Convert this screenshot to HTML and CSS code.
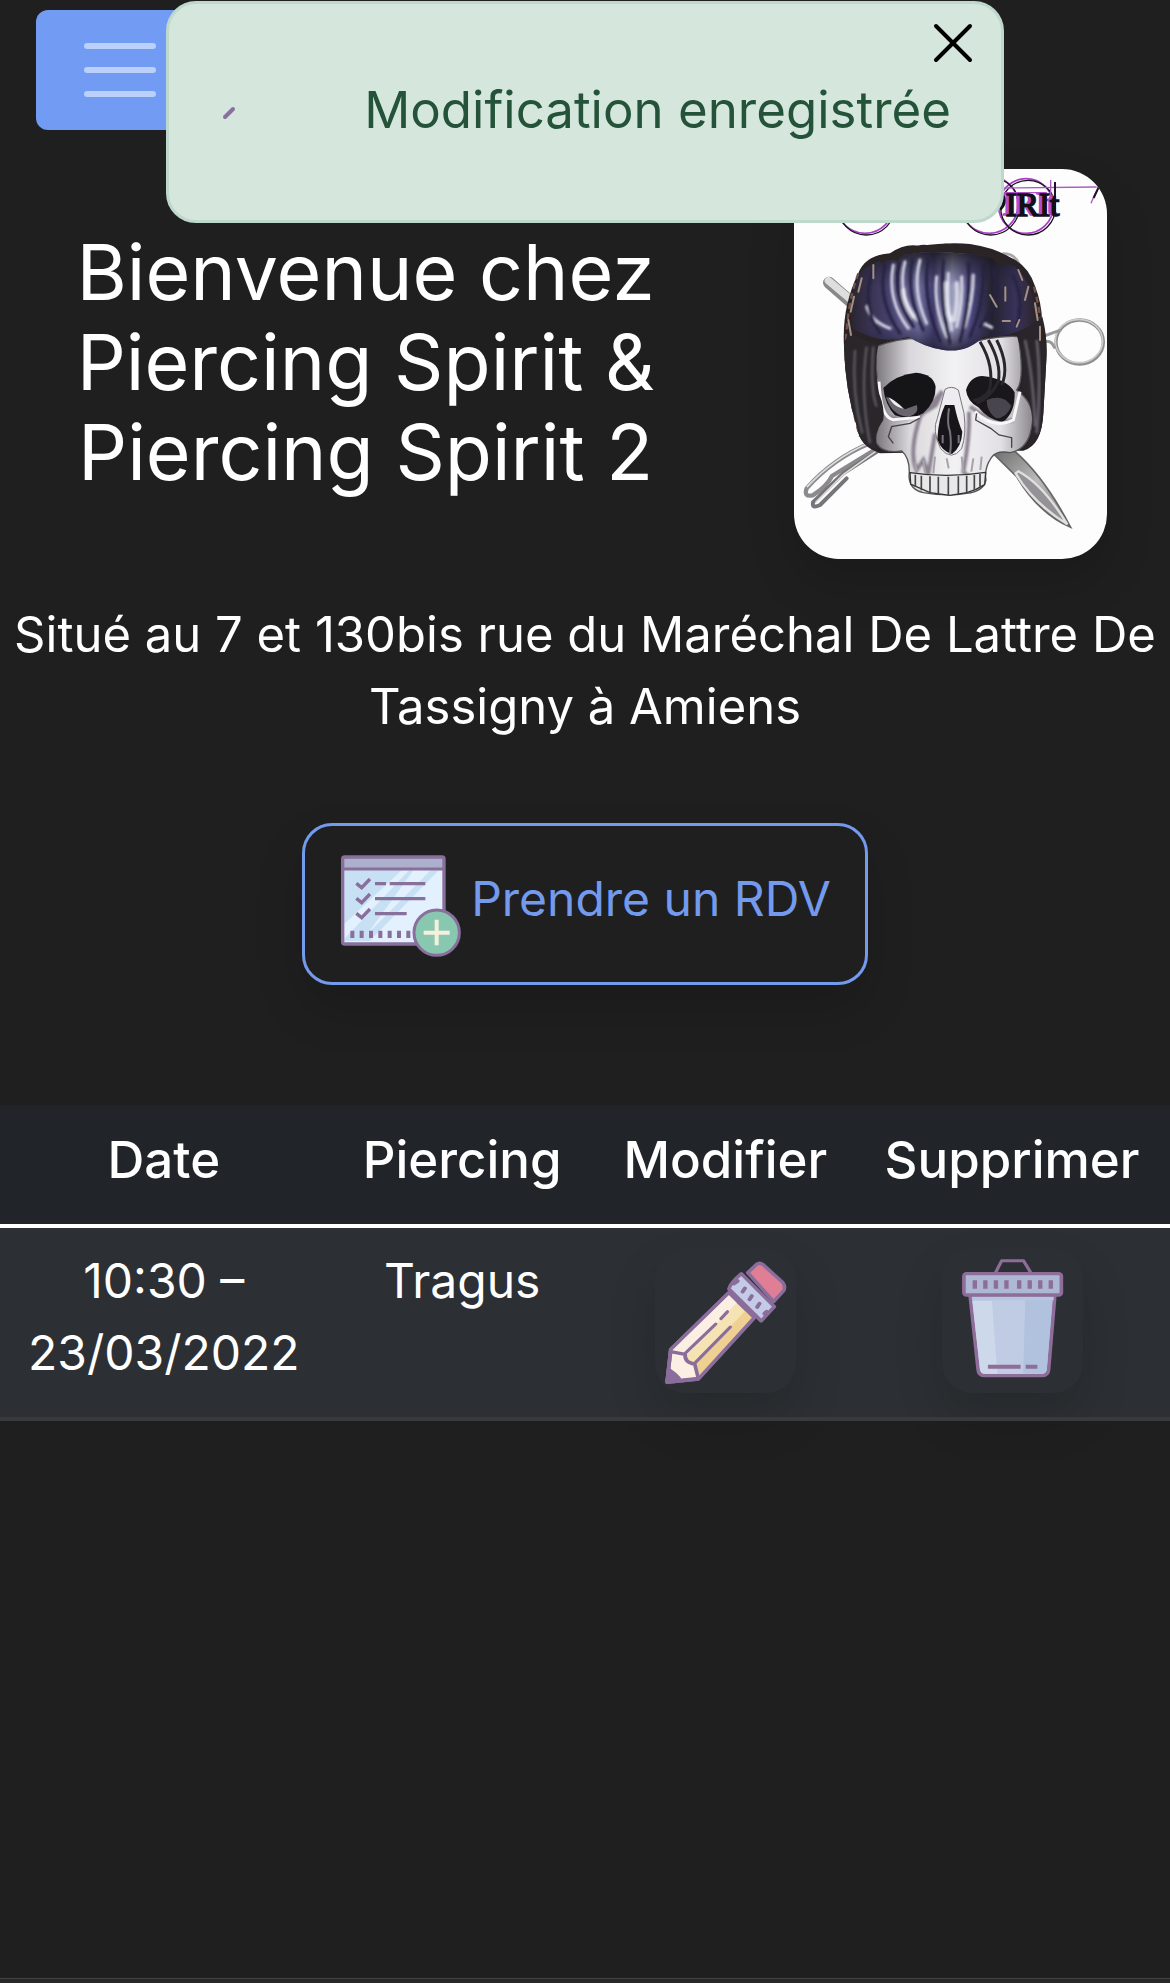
FILE: index.html
```html
<!DOCTYPE html>
<html lang="fr">
<head>
<meta charset="utf-8">
<meta name="viewport" content="width=device-width, initial-scale=1">
<title>Piercing Spirit</title>
<link rel="stylesheet" href="styles.css">
</head>
<body>
<div class="alert" role="alert">
  <svg class="alert-icon" viewBox="0 0 96 96" aria-hidden="true"><path d="M8 55l8-8" stroke="#8b6f9f" stroke-width="4" stroke-linecap="round"/></svg>
  <span class="alert-text">Modification enregistrée</span>
  <button class="alert-close" type="button" aria-label="Fermer">
    <svg viewBox="0 0 40 40" aria-hidden="true"><path d="M3 3l34 34M37 3L3 37" stroke="#000" stroke-width="4" stroke-linecap="round"/></svg>
  </button>
</div>

<nav class="navbar">
  <button class="toggler" type="button" aria-label="Menu"><span class="bar"></span><span class="bar"></span><span class="bar"></span></button>
</nav>

<main>
  <header class="hero">
    <h1 class="title">Bienvenue chez Piercing Spirit &amp; Piercing Spirit 2</h1>
    <svg class="logo" viewBox="42 27 939 1170" role="img" aria-label="Logo Piercing Spirit">
      <defs>
        <linearGradient id="hair" x1="0" x2="1"><stop offset="0" stop-color="#2a2533"/><stop offset=".2" stop-color="#47416e"/><stop offset=".36" stop-color="#6b6a98"/><stop offset=".44" stop-color="#413d6c"/><stop offset=".54" stop-color="#9a9cbd"/><stop offset=".64" stop-color="#4a467b"/><stop offset=".75" stop-color="#24222f"/><stop offset=".88" stop-color="#39335a"/><stop offset="1" stop-color="#2b2225"/></linearGradient>
        <linearGradient id="bone" x1="0" x2="1"><stop offset="0" stop-color="#77737a"/><stop offset=".22" stop-color="#dad8dc"/><stop offset=".5" stop-color="#f2f1f3"/><stop offset=".8" stop-color="#e2e0e4"/><stop offset="1" stop-color="#8b878e"/></linearGradient>
        <linearGradient id="steel" x1="0" x2="1" y2="1"><stop offset="0" stop-color="#666"/><stop offset=".5" stop-color="#bbb"/><stop offset="1" stop-color="#777"/></linearGradient>
        <linearGradient id="fade" x2="0" y2="1"><stop offset="0" stop-color="#171519" stop-opacity=".8"/><stop offset=".35" stop-color="#2b2845" stop-opacity="0"/><stop offset=".75" stop-color="#2b2845" stop-opacity="0"/><stop offset="1" stop-color="#211f38" stop-opacity=".9"/></linearGradient>
        <filter id="soft"><feGaussianBlur stdDeviation="3"/></filter>
      </defs>
      <rect x="42" y="27" width="939" height="1170" fill="#fdfdfd"/>
      <g fill="none" stroke-width="5">
        <g stroke="#a63fc4"><circle cx="255" cy="134" r="86"/><circle cx="628" cy="134" r="86"/><circle cx="738" cy="138" r="82"/></g>
        <g stroke="#1a101e" stroke-width="4"><circle cx="259" cy="139" r="86"/><circle cx="632" cy="139" r="86"/><circle cx="744" cy="143" r="82"/></g>
        <path d="M600 85l350-4M670 98h130M812 60v50M955 82q-12 22-22 48" stroke="#a95cc0" stroke-width="4"/>
        <path d="M825 66v95M957 80l-16 34" stroke="#20102a" stroke-width="6"/>
        <path d="M664 102q20 20-4 46" stroke="#140e18" stroke-width="10"/>
      </g>
      <g font-family="Liberation Serif, serif" font-size="100" stroke-width="5" text-anchor="end"><text x="828" y="164" fill="#b24dcb" stroke="#b24dcb">IRIt</text><text x="838" y="168" fill="#140e18" stroke="#140e18">IRIt</text></g>
      <g stroke-linecap="round" fill="none">
        <path d="M147 368L220 432" stroke="#888" stroke-width="36"/><path d="M145 362L220 425" stroke="#dedede" stroke-width="22"/>
        <path d="M670 281q45-2 58 62" stroke="#aaa" stroke-width="8"/>
        <ellipse cx="899" cy="546" rx="71" ry="66" stroke="#8f8d92" stroke-width="10"/><ellipse cx="897" cy="543" rx="71" ry="65" stroke="#ccc" stroke-width="5"/>
        <path d="M785 531q35-14 55-20M795 544q20-3 28 18" stroke="#999" stroke-width="9"/>
        <path d="M270 850Q160 895 80 985Q70 1012 98 1006Q140 980 156 948L290 866" stroke="#8c8a8e" stroke-width="13"/>
        <path d="M298 870L190 940L99 1027Q95 1047 120 1035L200 955" stroke="#777579" stroke-width="12"/>
        <path d="M268 848Q160 895 82 980M290 872L190 944L108 1026" stroke="#ddd" stroke-width="5"/>
      </g>
      <path d="M624 865l72 2Q790 945 872 1102Q775 1060 710 950Z" fill="url(#steel)" stroke="#666" stroke-width="5"/>
      <path d="M715 934Q790 975 862 1093Q755 1025 707 940Z" fill="#949297" stroke="#e0e0e0" stroke-width="7"/>
      <!-- hair mass -->
      <path d="M235 340Q255 285 330 280Q375 248 420 258Q510 245 570 252Q640 262 690 292Q745 315 765 378Q785 430 786 480Q803 530 799 600L790 760Q785 858 730 872L300 880Q240 860 232 805Q195 690 192 560Q185 440 235 340Z" fill="#292328"/>
      <path d="M235 340Q195 450 197 600Q212 740 240 830M762 380Q792 500 789 600Q792 730 770 830" fill="none" stroke="#725248" stroke-width="7" stroke-dasharray="18 13"/>
      <!-- skull -->
      <path d="M288 560Q420 510 530 560Q640 525 715 530Q735 660 710 690Q770 735 755 800Q745 868 690 878Q650 870 634 893Q612 925 618 960Q610 995 560 1000Q500 1010 430 998Q390 990 387 950Q392 895 365 873Q310 882 290 850Q275 800 310 768Q285 660 288 560Z" fill="url(#bone)" stroke="#555" stroke-width="4"/>
      <path d="M297 655Q300 740 318 770Q390 790 468 735L487 694L420 770Q385 880 410 930L430 900L445 945L465 820M567 755Q570 830 550 936L580 960M570 740Q635 790 700 780" fill="none" stroke="#8b8291" stroke-width="12" filter="url(#soft)"/>
      <path d="M310 684Q345 645 408 638Q460 642 467 680Q468 725 430 760Q390 782 345 766Q315 735 310 684Z" fill="#151416"/>
      <path d="M318 710Q345 720 375 748L410 735Q420 760 385 770Q335 768 318 710Z" fill="#69656e"/>
      <path d="M325 712Q345 720 370 746Q350 742 338 729Z" fill="#eee"/>
      <path d="M558 690Q570 650 607 648Q680 655 704 697Q706 760 668 786Q625 780 595 742Q562 725 558 690Z" fill="#19171a"/>
      <path d="M620 720Q670 700 694 738Q680 775 648 775Q620 755 620 720Z" fill="#49454e"/>
      <path d="M297 665Q302 775 340 779L420 772M585 755Q640 810 700 780L720 695" fill="none" stroke="#f7f7f7" stroke-width="9"/>
      <path d="M420 774L390 790L335 800L325 830L340 850M590 760l-3 20l45 25l25 20l38 8v30" fill="none" stroke="#464248" stroke-width="4"/>
      <path d="M495 688Q515 675 535 690L552 760Q560 820 545 866Q515 905 482 866Q455 810 472 775Z" fill="#eeecf0" stroke="#777" stroke-width="3"/>
      <path d="M495 735h28Q532 780 547 815Q545 860 516 882Q485 875 472 838Q475 775 495 735Z" fill="#17151a"/>
      <path d="M507 745Q500 790 510 815Q515 850 510 882M488 825v25M536 825v25" stroke="#777380" stroke-width="6" fill="none"/>
      <path d="M390 938Q500 955 617 937L614 974Q590 990 560 998L510 1006L450 998L392 972Z" fill="#e8e7e9" stroke="#333" stroke-width="4"/>
      <path d="M406 944v36M424 947v44M450 949v50M475 950v52M505 950v56M535 949v54M560 947v51M583 945v44M600 942v38" stroke="#444" stroke-width="5"/>
      <path d="M405 905l5 28M430 900l5 38M465 890l-5 50M500 895l6 30M545 890l5 48M580 895l-6 40M605 890l-4 40" stroke="#a7a3aa" stroke-width="6"/>
      <!-- side hair and quiff -->
      <path d="M203 520L295 555Q280 620 297 700Q315 745 310 780Q280 820 290 868Q240 860 232 805Q195 690 192 560Z" fill="#2a272b"/>
      <path d="M260 560Q240 700 270 850M225 570Q215 700 247 820M280 560Q270 690 290 740" fill="none" stroke="#5d5862" stroke-width="7" filter="url(#soft)"/>
      <path d="M705 510L787 470Q803 530 799 600L790 760Q785 850 740 863Q780 770 726 680Q738 600 705 510Z" fill="#29252a"/>
      <path d="M735 540Q760 650 765 800M770 540Q785 660 770 820" fill="none" stroke="#66616c" stroke-width="8" filter="url(#soft)"/>
      <path d="M245 330Q320 285 420 278Q600 270 705 320Q760 370 775 480Q700 535 610 530Q560 580 490 570Q430 560 385 530Q300 555 217 505Q205 410 245 330Z" fill="url(#hair)"/>
      <path d="M245 330Q320 285 420 278Q600 270 705 320Q760 370 775 480Q700 535 610 530Q560 580 490 570Q430 560 385 530Q300 555 217 505Q205 410 245 330Z" fill="url(#fade)"/>
      <g fill="none" stroke-linecap="round" filter="url(#soft)">
        <path d="M340 315Q320 420 385 505M375 305Q350 400 410 480M420 300Q395 390 440 490M470 350Q460 440 500 530M505 340Q500 430 515 510M545 350Q550 430 530 500M580 345Q580 420 555 500M260 440Q275 485 330 505M610 490l25 12" stroke="#d4d5e6" stroke-width="9"/>
        <path d="M500 370Q490 430 512 480M530 370Q535 430 522 480M370 390Q370 430 400 470" stroke="#f2f3fa" stroke-width="14" opacity=".7"/>
        <path d="M315 310Q290 420 360 520M358 310Q335 400 400 500M398 300Q375 400 430 510M445 300Q425 410 480 545M490 300Q480 440 510 550M565 310Q575 420 540 545M610 320Q615 430 570 530M280 330Q240 430 300 520M640 330Q670 420 600 500M700 350Q735 420 710 500" stroke="#252143" stroke-width="9"/>
      </g>
      <path d="M280 315v40M245 355l-10 40M222 410l-10 45M205 480l8 45M715 330l12 30M745 380l-10 40M765 430l8 50M676 382v40M630 405l20 35M690 483h-22M718 480l-8 20M780 500v40" stroke="#a39183" stroke-width="6" stroke-linecap="round"/>
      <path d="M600 545Q645 620 628 690Q615 715 580 722M625 540Q665 610 655 665Q630 715 590 730M650 540Q690 620 665 675" fill="none" stroke="#29272c" stroke-width="9"/>
      <path d="M300 305q25-20 50-12q15-28 45-20q35-18 60-5q40-16 75-2q35-14 70 14q45 0 70 35" fill="none" stroke="#2a2524" stroke-width="17"/>
    </svg>
  </header>

  <p class="address">Situé au 7 et 130bis rue du Maréchal De Lattre De Tassigny à Amiens</p>

  <div class="actions">
    <a class="booking" href="#rdv">
      <svg class="booking-icon" viewBox="36 11 360 360" aria-hidden="true">
        <rect x="41" y="50" width="304" height="261" rx="6" fill="#e3f0fd"/>
        <path d="M46 90h172L46 250z" fill="#c7e0f4"/><path d="M235 90h18L100 302H80L46 302v-20zM305 90h24L122 302h-27z" fill="#c7e0f4"/>
        <path d="M240 90h-10L46 266v30z" fill="#e3f0fd"/>
        <rect x="44" y="53" width="300" height="30" fill="#adb0cc"/>
        <rect x="41" y="50" width="304" height="261" rx="6" fill="none" stroke="#886f9c" stroke-width="10"/>
        <path d="M41 86h304" stroke="#886f9c" stroke-width="9"/>
        <path d="M82 129l16 13l25-26M82 174l16 13l25-26M82 219l16 13l25-26M138 130h33M182 130h107M138 175h151M138 220h95" fill="none" stroke="#886f9c" stroke-width="10"/>
        <path d="M70 271v22M98 271v22M126 271v22M154 271v22M182 271v22M210 271v22M238 271v22" stroke="#886f9c" stroke-width="12"/>
        <circle cx="323" cy="277" r="68" fill="#88c8b0" stroke="#886f9c" stroke-width="9"/>
        <path d="M323 238v77M284 277h78" stroke="#f5f0dd" stroke-width="12"/>
      </svg>
      <span>Prendre un RDV</span>
    </a>
  </div>

  <table class="bookings">
    <colgroup><col class="col-date"><col class="col-piercing"><col class="col-edit"><col class="col-delete"></colgroup>
    <thead><tr><th scope="col">Date</th><th scope="col">Piercing</th><th scope="col">Modifier</th><th scope="col">Supprimer</th></tr></thead>
    <tbody><tr>
      <td>10:30 – 23/03/2022</td>
      <td>Tragus</td>
      <td class="icon-cell"><button class="icon-button" type="button" aria-label="Modifier">
        <svg viewBox="158 84 423 432" aria-hidden="true"><g transform="scale(1.0909 1)" stroke="#8a6d9b" stroke-width="10" stroke-linejoin="round" stroke-linecap="round">
          <path d="M348 215L418 290L264 474L178 484L188 385Z" fill="#f6e3b4"/>
          <path d="M350 218L372 242L232 402L190 388Z" fill="#faefe2" stroke="none"/>
          <path d="M396 266L418 290L264 470L255 427Z" fill="#efd093" stroke="none"/>
          <path d="M188 392L228 400Q225 424 254 429L264 472L178 482Z" fill="#faefe2"/>
          <path d="M178 482l8-34q14 10 25 24Z" fill="#8a6d9b"/>
          <path d="M348 215L418 290L264 474L178 484L188 385Z" fill="none"/>
          <path d="M228 397L312 309M254 427L352 318M326 293L344 272" fill="none" stroke-width="9"/>
          <path d="M400 155L424 130Q433 122 443 132L496 184Q505 198 498 210L471 242Z" fill="#df7e95"/>
          <path d="M382 158L473 257L437 300L348 204Q352 185 382 158Z" fill="#c3cbe6"/>
          <path d="M386 212l6-10M405 235l6-10M426 258l6-10M362 188l10-8M452 272l-6 6" fill="none" stroke-width="11"/>
        </g></svg></button></td>
      <td class="icon-cell"><button class="icon-button" type="button" aria-label="Supprimer">
        <svg viewBox="1023 84 423 432" aria-hidden="true"><g transform="scale(1.0909 1)" stroke="#8f6d9a" stroke-width="10" stroke-linejoin="round">
          <path d="M1085 155L1102 119H1162L1182 155" fill="none" stroke-width="9"/>
          <path d="M1015 223H1248L1231 445Q1230 464 1211 464H1056Q1038 464 1037 445Z" fill="#bfcce4"/>
          <path d="M1021 240H1075L1090 458H1058Q1044 458 1042 443Z" fill="#cdd8eb" stroke="none"/>
          <path d="M1167 228H1242L1226 445Q1224 458 1211 458H1161Z" fill="#b1c2de" stroke="none"/>
          <path d="M1020 232H1245" stroke="#b5c6df" stroke-width="12"/>
          <rect x="998" y="158" width="268" height="64" rx="7" fill="#adb8d3"/>
          <path d="M1028 178v25M1057 178v25M1086 178v25M1115 178v25M1150 178v25M1179 178v25M1208 178v25M1237 178v25M1064 437h90M1168 437h32" fill="none" stroke-width="12"/>
        </g></svg></button></td>
    </tr></tbody>
  </table>
</main>
<footer class="footer"></footer>
</body>
</html>
```
FILE: styles.css
```css
* { box-sizing: border-box; }

body {
  margin: 0;
  min-height: 100vh;
  display: flex;
  flex-direction: column;
  background: #1f1f1f;
  color: #fff;
  font-family: Inter, "Liberation Sans", sans-serif;
  font-size: 48px;
  line-height: 72px;
}

main { flex: 1; }

button { font: inherit; border: 0; padding: 0; cursor: pointer; }

svg { display: block; }

.alert {
  position: fixed;
  z-index: 10;
  top: 1px;
  left: 50%;
  width: 838px;
  max-width: 100%;
  min-height: 222px;
  transform: translateX(-50%);
  display: flex;
  align-items: center;
  justify-content: space-between;
  padding: 0 50px 4px 48px;
  background: #d5e7dd;
  border: 3px solid #bfd8cc;
  border-radius: 30px;
  color: #245339;
  font-size: 51px;
}

.alert-icon { width: 96px; height: 96px; fill: none; }

.alert-text { white-space: nowrap; }

.alert-close {
  position: absolute;
  top: 19px;
  right: 28px;
  width: 40px;
  height: 40px;
  background: none;
}

.navbar { padding: 10px 36px 0; }

.toggler {
  width: 168px;
  height: 120px;
  display: flex;
  flex-direction: column;
  align-items: center;
  justify-content: center;
  gap: 18px;
  background: #729bf4;
  border-radius: 12px;
}

.bar { width: 72px; height: 6px; border-radius: 3px; background: #bbd0fb; }

.hero {
  display: grid;
  grid-template-columns: 5fr 3fr;
  align-items: center;
  justify-items: center;
  padding-top: 39px;
}

.title {
  margin: 0;
  padding: 0 48px 4px;
  font-size: 77px;
  line-height: 90px;
  font-weight: 400;
  text-align: center;
}

.logo {
  width: 313px;
  height: 390px;
  border-radius: 45px;
  box-shadow: 0 24px 48px rgba(0, 0, 0, .15);
}

.address {
  margin: 40px 0 80px;
  padding: 0 8px;
  font-size: 49px;
  text-align: center;
}

.actions { display: flex; justify-content: center; }

.booking {
  display: flex;
  align-items: center;
  gap: 10px;
  min-height: 162px;
  padding: 0 34px 0 36px;
  border: 3px solid #749aee;
  border-radius: 30px;
  box-shadow: 0 24px 48px rgba(0, 0, 0, .15);
  color: #749aee;
  text-decoration: none;
}

.booking span { padding-bottom: 10px; }

.booking-icon { width: 120px; height: 120px; }

.bookings {
  width: 100%;
  margin-top: 120px;
  border-collapse: collapse;
  table-layout: fixed;
  text-align: center;
}

.col-date { width: 28%; }
.col-piercing { width: 23%; }
.col-edit { width: 22%; }
.col-delete { width: 27%; }

.bookings th {
  padding: 19px 0 28px;
  background: #212529;
  font-size: 51px;
  font-weight: 500;
}

.bookings td {
  padding: 17px 24px 24px;
  background: #2c3034;
  border-top: 4px solid #fff;
  border-bottom: 4px solid #373b3e;
  vertical-align: top;
}

.bookings .icon-cell { padding-top: 21px; }

.icon-button {
  width: 141px;
  height: 144px;
  display: block;
  margin: 0 auto;
  background: none;
  border-radius: 30px;
  box-shadow: 0 24px 48px rgba(0, 0, 0, .15);
}

.footer { height: 5px; background: #29272a; border-top: 1px solid #444; }
```
